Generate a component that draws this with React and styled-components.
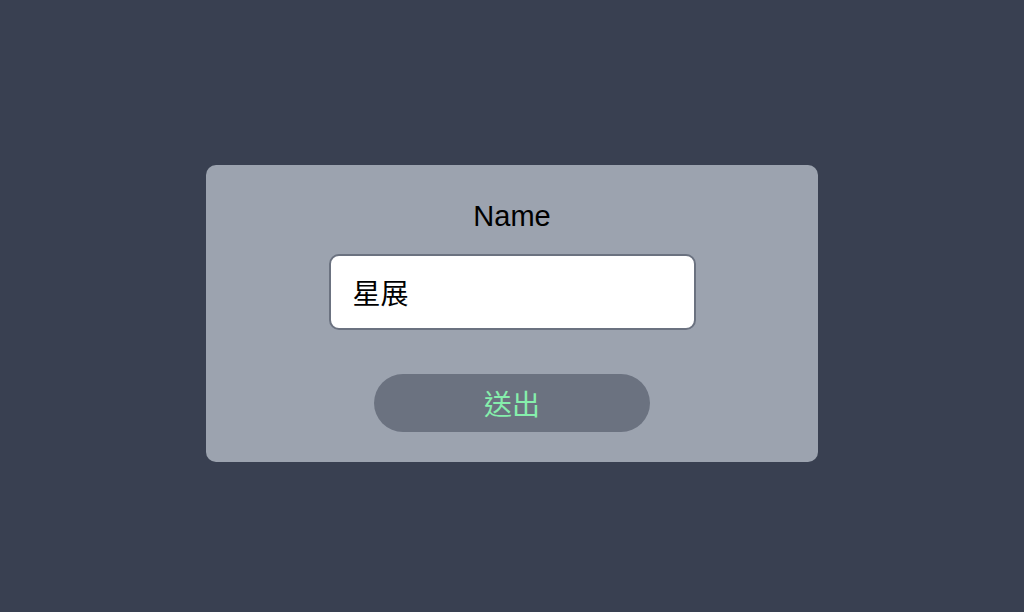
import React from "react";
import styled, { createGlobalStyle } from "styled-components";

const Global = createGlobalStyle`
  html, body { margin: 0; padding: 0; background: #394051; }
  body { font-family: "Liberation Sans", "Noto Sans CJK TC", sans-serif; }
  * { box-sizing: border-box; }
`;

const Page = styled.div`
  min-height: 612px;
  display: flex;
  justify-content: center;
  align-items: flex-start;
  padding-top: 165px;
  background: #394051;
`;

const Card = styled.form`
  width: 612px;
  height: 297px;
  background: #9ca3af;
  border-radius: 10px;
  display: flex;
  flex-direction: column;
  align-items: center;
  padding-top: 34px;
`;

const Label = styled.label`
  font-size: 29px;
  line-height: 34px;
  height: 34px;
  color: #000;
`;

const Input = styled.input`
  margin-top: 21px;
  width: 367px;
  height: 76px;
  border: 2px solid #6b7280;
  border-radius: 10px;
  background: #fff;
  padding: 0 22px;
  font-family: "Liberation Sans", "Noto Sans CJK TC", sans-serif;
  font-size: 28px;
  color: #000;
  outline: none;
`;

const Button = styled.button`
  margin-top: 44px;
  width: 276px;
  height: 58px;
  border: none;
  border-radius: 29px;
  background: #6b7280;
  color: #86efac;
  font-family: "Liberation Sans", "Noto Sans CJK TC", sans-serif;
  font-size: 28px;
  cursor: pointer;
`;

export default function App() {
  return (
    <>
      <Global />
      <Page>
        <Card onSubmit={(e) => e.preventDefault()}>
          <Label htmlFor="name">Name</Label>
          <Input id="name" defaultValue="星展" />
          <Button type="submit">送出</Button>
        </Card>
      </Page>
    </>
  );
}
